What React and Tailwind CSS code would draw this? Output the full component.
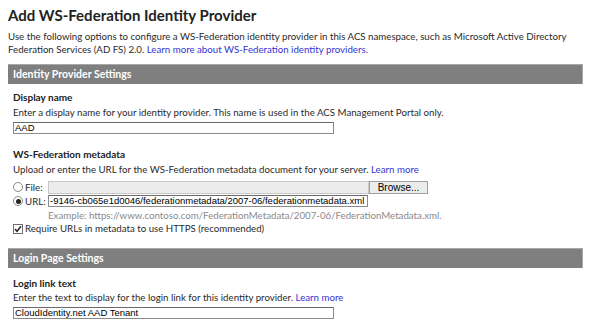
import React from 'react';

const ui = { fontFamily: 'Lato, "Open Sans", sans-serif' };
const arial = { fontFamily: '"Liberation Sans", Arial, sans-serif' };

function SectionBar({ children }) {
  return (
    <div className="h-[20px] bg-[#7f7f7f] border-t border-[#a8a8a8] border-r border-r-[#a8a8a8] flex items-center pl-[5px] text-[10.5px] font-bold text-white">
      {children}
    </div>
  );
}

function Radio({ checked }) {
  return (
    <span className="w-[10px] h-[10px] rounded-full border border-[#8a8a8a] bg-white flex items-center justify-center shrink-0">
      {checked && <span className="w-[5px] h-[5px] rounded-full bg-[#222]" />}
    </span>
  );
}

function Check() {
  return (
    <span className="w-[10px] h-[10px] border border-[#6f6f6f] bg-white flex items-center justify-center shrink-0">
      <svg width="8" height="8" viewBox="0 0 8 8">
        <path d="M1 4 L3 6.3 L7 1.2" fill="none" stroke="#222" strokeWidth="1.4" />
      </svg>
    </span>
  );
}

function TextBox({ value, width = 'w-[321px]' }) {
  return (
    <div
      className={`${width} h-[12px] border border-[#8a8a8a] border-t-[#6a6a6a] bg-white text-[9.5px] leading-[10px] text-black pl-[1px] overflow-hidden whitespace-nowrap`}
      style={arial}
    >
      {value}
    </div>
  );
}

export default function App() {
  return (
    <div className="bg-white w-[589px] h-[335px] overflow-hidden pl-[8px] pr-[6px] text-[#2a2a2a]" style={ui}>
      <h1 className="pt-[5px] text-[15px] leading-[20px] font-bold text-[#222]">
        Add WS-Federation Identity Provider
      </h1>

      <p className="mt-[5px] text-[9.7px] leading-[13px] whitespace-nowrap">
        Use the following options to configure a WS-Federation identity provider in this ACS namespace, such as Microsoft Active Directory
        <br />
        Federation Services (AD FS) 2.0. <span className="text-[#3434d0]">Learn more about WS-Federation identity providers.</span>
      </p>

      <div className="mt-[8px]">
        <SectionBar>Identity Provider Settings</SectionBar>
      </div>

      <div className="pl-[5px]">
        <div className="mt-[6px] text-[10px] leading-[14px] font-bold text-[#222]">Display name</div>
        <div className="mt-[2px] text-[9.7px] leading-[13px]">
          Enter a display name for your identity provider. This name is used in the ACS Management Portal only.
        </div>
        <div className="mt-[3px]">
          <TextBox value="AAD" />
        </div>

        <div className="mt-[13px] text-[10px] leading-[14px] font-bold text-[#222]">WS-Federation metadata</div>
        <div className="mt-[2px] text-[9.7px] leading-[13px]">
          Upload or enter the URL for the WS-Federation metadata document for your server.{' '}
          <span className="text-[#3434d0]">Learn more</span>
        </div>

        <div className="mt-[4px] flex items-center h-[14px]">
          <div className="w-[35px] flex items-center gap-[2px] text-[9.7px]">
            <Radio />
            <span>File:</span>
          </div>
          <div className="w-[321px] h-[13px] bg-[#ececec] border border-[#c8c8c8]" />
          <div
            className="w-[59px] h-[13px] bg-[#ececec] border border-[#a0a0a0] text-[10px] leading-[11px] text-center text-black"
            style={arial}
          >
            Browse...
          </div>
        </div>

        <div className="mt-[1px] flex items-center h-[12px]">
          <div className="w-[35px] flex items-center gap-[2px] text-[9.7px]">
            <Radio checked />
            <span>URL:</span>
          </div>
          <TextBox value="-9146-cb065e1d0046/federationmetadata/2007-06/federationmetadata.xml" width="w-[320px]" />
        </div>

        <div className="pl-[35px] mt-[2px] text-[9.7px] leading-[13px] text-[#8a8a8a]">
          Example: https://www.contoso.com/FederationMetadata/2007-06/FederationMetadata.xml.
        </div>

        <div className="mt-[0px] flex items-center gap-[2px] text-[9.7px] leading-[13px]">
          <Check />
          <span>Require URLs in metadata to use HTTPS (recommended)</span>
        </div>
      </div>

      <div className="mt-[13px]">
        <SectionBar>Login Page Settings</SectionBar>
      </div>

      <div className="pl-[5px]">
        <div className="mt-[8px] text-[10px] leading-[14px] font-bold text-[#222]">Login link text</div>
        <div className="mt-[1px] text-[9.7px] leading-[13px]">
          Enter the text to display for the login link for this identity provider.{' '}
          <span className="text-[#3434d0]">Learn more</span>
        </div>
        <div className="mt-[3px]">
          <TextBox value="CloudIdentity.net AAD Tenant" />
        </div>
      </div>
    </div>
  );
}
